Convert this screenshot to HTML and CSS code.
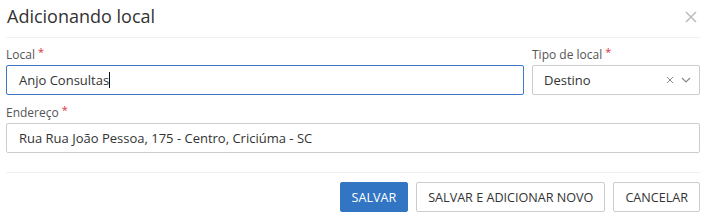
FILE: index.html
```html
<!DOCTYPE html>
<html lang="pt">
<head>
<meta charset="utf-8">
<link rel="stylesheet" href="styles.css">
</head>
<body>
<div class="modal">
  <div class="modal-header">
    <h1 class="title">Adicionando local</h1>
    <svg class="close" width="12" height="12" viewBox="0 0 12 12"><path d="M1 1L11 11M11 1L1 11" stroke="#bdbdbd" stroke-width="1.6" fill="none"/></svg>
  </div>
  <div class="modal-body">
    <div class="row">
      <div class="group grow">
        <label class="label">Local<span class="req">*</span></label>
        <div class="input focused">Anjo Consultas<span class="caret"></span></div>
      </div>
      <div class="group tipo">
        <label class="label">Tipo de local<span class="req">*</span></label>
        <div class="input select">
          <span class="value">Destino</span>
          <span class="icons">
            <svg width="8" height="8" viewBox="0 0 8 8"><path d="M1 1L7 7M7 1L1 7" stroke="#8a8a8a" stroke-width="1" fill="none"/></svg>
            <svg width="10" height="6" viewBox="0 0 10 6"><path d="M1 1L5 5L9 1" stroke="#8a8a8a" stroke-width="1.2" fill="none"/></svg>
          </span>
        </div>
      </div>
    </div>
    <div class="group">
      <label class="label">Endereço<span class="req">*</span></label>
      <div class="input">Rua Rua João Pessoa, 175 - Centro, Criciúma - SC</div>
    </div>
  </div>
  <div class="modal-footer">
    <button class="btn primary">SALVAR</button>
    <button class="btn">SALVAR E ADICIONAR NOVO</button>
    <button class="btn">CANCELAR</button>
  </div>
</div>
</body>
</html>
```
FILE: styles.css
```css
* { box-sizing: border-box; }
html, body { margin: 0; padding: 0; background: #fff; }
body { font-family: "Open Sans", "Liberation Sans", sans-serif; color: #333; }
.modal { width: 712px; padding: 0 12px 0 6px; }
.modal-header {
  height: 38px;
  border-bottom: 1px solid #f0f0f0;
  display: flex;
  align-items: flex-start;
  justify-content: space-between;
  padding: 0 3px 0 1px;
}
.title { margin: 4px 0 0; font-size: 18px; font-weight: 400; color: #333; line-height: 24px; }
.close { margin-top: 11px; }
.modal-body { padding: 8px 0 19px; display: flex; flex-direction: column; gap: 9px; }
.row { display: flex; gap: 8px; }
.grow { flex: 1; }
.tipo { width: 168px; }
.group { display: flex; flex-direction: column; }
.label { font-size: 12px; line-height: 17px; color: #555; margin-bottom: 2px; }
.req { color: #d9333f; font-size: 11px; vertical-align: top; position: relative; top: -3px; margin-left: 3px; }
.input {
  height: 30px;
  border: 1px solid #ccc;
  border-radius: 2px;
  font-size: 13px;
  line-height: 28px;
  padding: 0 12px;
  color: #333;
  display: flex;
  align-items: center;
}
.input.focused { border-color: #3c78c3; }
.caret { display: inline-block; width: 1px; height: 16px; background: #111; }
.select { justify-content: space-between; padding-left: 11px; padding-right: 8px; }
.icons { display: flex; align-items: center; gap: 7px; }
.modal-footer {
  border-top: 1px solid #f0f0f0;
  padding-top: 9px;
  display: flex;
  justify-content: flex-end;
  gap: 8px;
}
.btn {
  height: 30px;
  font-family: "Open Sans", "Liberation Sans", sans-serif;
  font-size: 12.6px;
  color: #333;
  background: #fff;
  border: 1px solid #ccc;
  border-radius: 2px;
  padding: 0 11px;
}
.btn.primary { background: #3276c3; border-color: #3276c3; color: #fff; }
```
